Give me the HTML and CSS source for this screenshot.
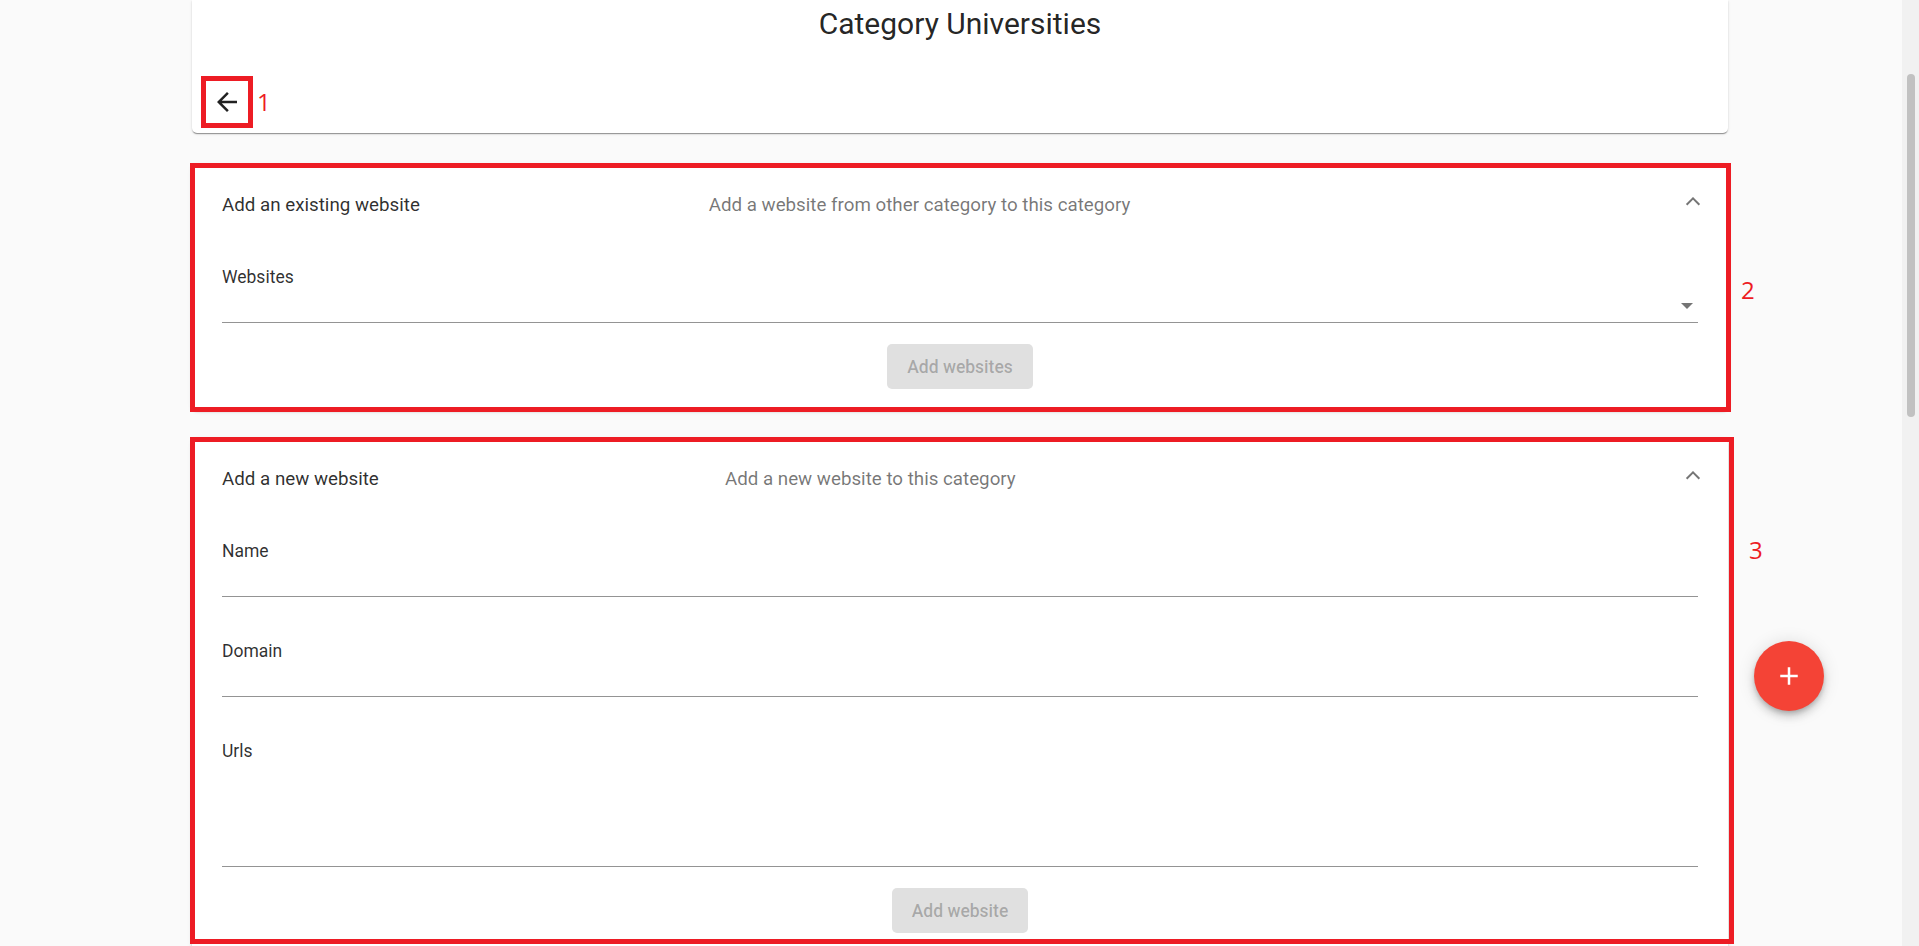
FILE: index.html
```html
<!DOCTYPE html>
<html lang="en">
<head>
<meta charset="utf-8">
<title>Category Universities</title>
<link rel="stylesheet" href="styles.css">
</head>
<body>
<div class="page">
  <div class="card header-card">
    <h1 class="card-title">Category Universities</h1>
    <div class="back-row">
      <button class="icon-btn" type="button" aria-label="Back">
        <svg viewBox="0 0 24 24" width="30" height="30"><path d="M20 11H7.83l5.59-5.59L12 4l-8 8 8 8 1.41-1.41L7.83 13H20v-2z"/></svg>
      </button>
      <span class="note note-1">1</span>
    </div>
  </div>

  <section class="panel panel-existing">
    <div class="panel-header">
      <span class="panel-title">Add an existing website</span>
      <span class="panel-desc">Add a website from other category to this category</span>
      <span class="indicator"></span>
    </div>
    <div class="panel-body">
      <div class="field">
        <div class="field-label">Websites</div>
        <div class="field-input select"><span class="select-arrow"></span></div>
      </div>
      <div class="actions"><button class="btn" type="button" disabled>Add websites</button></div>
    </div>
    <div class="mark mark-2"></div>
    <span class="note note-2">2</span>
  </section>

  <section class="panel panel-new">
    <div class="panel-header">
      <span class="panel-title">Add a new website</span>
      <span class="panel-desc">Add a new website to this category</span>
      <span class="indicator"></span>
    </div>
    <div class="panel-body">
      <div class="field">
        <div class="field-label">Name</div>
        <div class="field-input"></div>
      </div>
      <div class="field">
        <div class="field-label">Domain</div>
        <div class="field-input"></div>
      </div>
      <div class="field">
        <div class="field-label">Urls</div>
        <div class="field-input textarea"></div>
      </div>
      <div class="actions"><button class="btn" type="button" disabled>Add website</button></div>
    </div>
    <div class="mark mark-3"></div>
    <span class="note note-3">3</span>
  </section>
</div>

<button class="fab" type="button" aria-label="Add">
  <svg viewBox="0 0 24 24" width="30" height="30"><path d="M19 13h-6v6h-2v-6H5v-2h6V5h2v6h6v2z"/></svg>
</button>

<div class="scrollbar" aria-hidden="true">
  <span class="sb-thumb"></span>
</div>
</body>
</html>
```

FILE: styles.css
```css
body {
  margin: 0;
  background: #fafafa;
  font-family: Roboto, "Liberation Sans", Arial, sans-serif;
  color: rgba(0, 0, 0, 0.87);
}

.page {
  width: 1536px;
  margin-left: calc(50vw - 767.5px);
  padding-bottom: 40px;
}

.card {
  background: #fff;
  box-shadow: 0 2px 1px -1px rgba(0,0,0,.25), 0 1px 1px 0 rgba(0,0,0,.16), 0 1px 3px 0 rgba(0,0,0,.12);
  border-radius: 0 0 5px 5px;
}

.header-card {
  padding: 6px 10px 6px;
}

.card-title {
  margin: 0;
  font-weight: 400;
  font-size: 30px;
  line-height: 36px;
  text-align: center;
  color: rgba(0, 0, 0, 0.87);
}

.back-row {
  display: flex;
  align-items: flex-start;
  margin-top: 35px;
}

.icon-btn {
  width: 50px;
  height: 50px;
  padding: 0;
  border: 0;
  background: transparent;
  display: flex;
  align-items: center;
  justify-content: center;
  outline: 5px solid #ed1c24;
  outline-offset: -4px;
}
.icon-btn svg { fill: rgba(0, 0, 0, 0.87); }

.note {
  font-family: "Open Sans", "Noto Sans", sans-serif;
  font-size: 24px;
  line-height: 24px;
  color: #ed1c24;
}
.note-1 { margin: 13px 0 0 5px; }

.panel {
  position: relative;
  background: #fff;
  border-radius: 5px;
  box-shadow: 0 3px 1px -2px rgba(0,0,0,.2), 0 2px 2px 0 rgba(0,0,0,.14), 0 1px 5px 0 rgba(0,0,0,.12);
}
.panel-existing { margin-top: 32px; }
.panel-new { margin-top: 29px; }

.panel-header {
  height: 80px;
  padding: 0 30px;
  display: flex;
  align-items: center;
  font-size: 18.75px;
}
.panel-title {
  flex: 1 1 auto;
  margin-right: 20px;
  color: rgba(0, 0, 0, 0.82);
}
.panel-desc {
  flex: 2 1 auto;
  margin-right: 20px;
  color: rgba(0, 0, 0, 0.54);
}
.indicator {
  flex: none;
  width: 10px;
  height: 10px;
  box-sizing: border-box;
  border-style: solid;
  border-color: rgba(0, 0, 0, 0.54);
  border-width: 0 2.5px 2.5px 0;
  transform: rotate(225deg);
  margin-top: -2px;
}

.panel-body {
  padding: 21px 30px 21px;
}

.field + .field { margin-top: 43px; }

.field-label {
  font-size: 17.5px;
  line-height: 22px;
  color: rgba(0, 0, 0, 0.82);
}
.field-input {
  height: 35px;
  box-sizing: border-box;
  border-bottom: 1px solid #949494;
}
.field-input.textarea { height: 105px; }
.field-input.select {
  display: flex;
  align-items: center;
  justify-content: flex-end;
  padding-right: 5px;
}
.select-arrow {
  width: 0;
  height: 0;
  border-left: 6.25px solid transparent;
  border-right: 6.25px solid transparent;
  border-top: 6.25px solid #757575;
  margin-top: 2px;
}

.actions {
  display: flex;
  justify-content: center;
  margin-top: 21px;
}
.btn {
  height: 45px;
  min-width: 80px;
  padding: 0 20px;
  border: 0;
  border-radius: 5px;
  background: #e0e0e0;
  color: rgba(0, 0, 0, 0.26);
  font-family: Roboto, "Liberation Sans", sans-serif;
  font-weight: 500;
  font-size: 17.5px;
}

.mark {
  position: absolute;
  border: 5px solid #ed1c24;
  pointer-events: none;
}
.mark-2 { left: -2px; right: -3px; top: -2px; bottom: -2px; }
.mark-3 { left: -2px; right: -6px; top: -2px; bottom: 10px; }

.note-2 { position: absolute; left: calc(100% + 13px); top: 113px; }
.note-3 { position: absolute; left: calc(100% + 21px); top: 99px; }

.fab {
  position: fixed;
  left: calc(50vw + 794px);
  top: 641px;
  width: 70px;
  height: 70px;
  border-radius: 50%;
  border: 0;
  padding: 0;
  background: #f44336;
  display: flex;
  align-items: center;
  justify-content: center;
  box-shadow: 0 3px 5px -1px rgba(0,0,0,.2), 0 6px 10px 0 rgba(0,0,0,.14), 0 1px 18px 0 rgba(0,0,0,.12);
}
.fab svg { fill: #fff; }

/* window scrollbar, drawn over the page edge */
.scrollbar {
  position: fixed;
  top: 0;
  right: 0;
  width: 17px;
  height: 100vh;
  box-sizing: border-box;
  padding-top: 74px;
  background: #f1f1f1;
  display: flex;
  justify-content: center;
  align-items: flex-start;
}
.sb-thumb {
  width: 8px;
  height: 343px;
  border-radius: 4px;
  background: #c1c1c1;
}
```
